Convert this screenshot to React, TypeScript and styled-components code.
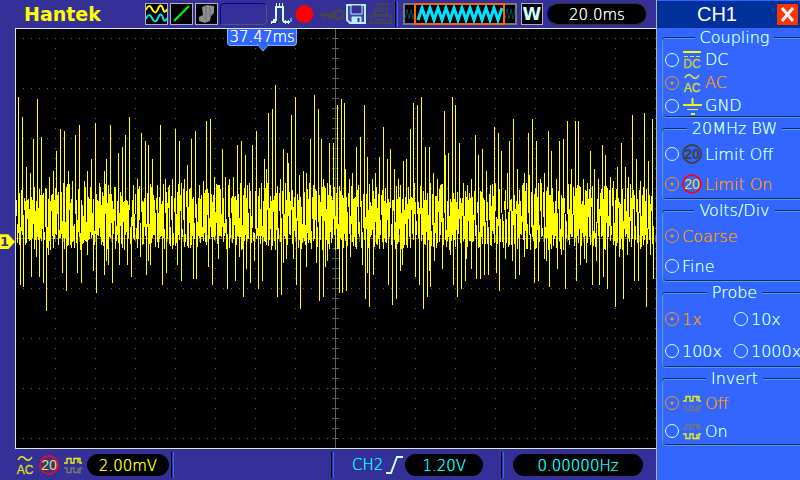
import React from "react";
import styled, { createGlobalStyle } from "styled-components";

const UI_FONT = '"DejaVu Sans", "Liberation Sans", sans-serif';
const ORANGE = "#ff9900";
const PALE = "#ccffff";
const BLUE = "#3366ff";
const INDIGO = "#353098";

const GlobalStyle = createGlobalStyle`
  * { box-sizing: border-box; }
  body { margin: 0; background: ${INDIGO}; }
  button, input, output { font: inherit; }
`;

const Screen = styled.div`
  display: flex;
  min-height: 100vh;
  overflow: hidden;
  background: ${INDIGO};
  font-family: ${UI_FONT};
  font-weight: 200;
  font-size: 15px;
  text-shadow: 0 0 0 currentColor;
  svg, h1, h2, button { text-shadow: none; }
`;

const Scope = styled.main`
  flex: 1;
  min-width: 0;
  display: flex;
  flex-direction: column;
`;

const Toolbar = styled.header`
  display: flex;
  align-items: center;
  gap: 2px;
  height: 28px;
  padding-left: 24px;
`;

const Brand = styled.h1`
  margin: 0;
  width: 119px;
  flex: none;
  font-size: 19px;
  line-height: 28px;
  font-weight: 700;
  color: #ffff00;
`;

const ToolButton = styled.button<{ $w: number; $framed?: boolean }>`
  flex: none;
  width: ${(p) => p.$w}px;
  height: 22px;
  padding: 0;
  border: ${(p) => (p.$framed ? "1px solid #b0b0b8" : "0")};
  background: ${(p) => (p.$framed ? "#000" : "transparent")};
  color: ${PALE};
  font-weight: 700;
  font-size: 17px;
  line-height: 20px;
  text-align: center;
  svg { display: block; }
`;

const EmptySlot = styled.div`
  flex: none;
  width: 47px;
  height: 22px;
  border: 1px solid #555577;
  border-top-color: #0000a8;
  border-left-color: #0000a8;
  border-radius: 4px;
`;

const Divider = styled.div`
  flex: none;
  width: 3px;
  height: 26px;
  background: linear-gradient(90deg, #000 1px, transparent 1px 2px, ${BLUE} 2px);
`;

const TimeGroup = styled.div`
  display: flex;
  align-items: center;
  gap: 4px;
  margin-left: 3px;
`;

const Pill = styled.output<{ $w: number; $color: string; $edge?: boolean }>`
  flex: none;
  width: ${(p) => p.$w}px;
  height: 22px;
  line-height: ${(p) => (p.$edge ? 22 : 24)}px;
  text-align: center;
  border-radius: 11px;
  background: #000;
  color: ${(p) => p.$color};
  border: ${(p) => (p.$edge ? "1px solid #333" : "0")};
  border-left-color: #0000a8;
`;

const PlotRow = styled.div`
  flex: 1;
  display: flex;
  min-height: 0;
`;

const Gutter = styled.div`
  position: relative;
  width: 15px;
  flex: none;
`;

const ChannelMarker = styled.div`
  position: absolute;
  top: 49%;
  left: 0;
  width: 15px;
  height: 15px;
  background: #ffff00;
  clip-path: polygon(0 0, 55% 0, 100% 50%, 55% 100%, 0 100%);
  color: ${INDIGO};
  font-size: 13px;
  font-weight: 700;
  line-height: 15px;
  text-shadow: none;
`;

const Plot = styled.section`
  position: relative;
  flex: 1;
  min-width: 0;
  background: #000;
  border: 1px solid #dde6e6;
  border-right: 0;
  > svg { display: block; width: 100%; height: 100%; }
`;

const TriggerTag = styled.div`
  position: absolute;
  top: 0;
  left: 33%;
  width: 70px;
  height: 17px;
  line-height: 17px;
  text-align: center;
  color: #fff;
  background: ${BLUE};
  border: 1px solid #66b8ff;
  border-top: 0;
  border-radius: 0 0 4px 4px;
  svg { position: absolute; top: 15px; left: 28px; }
`;

const StatusBar = styled.footer`
  display: grid;
  grid-template-columns: 171fr 160fr 170fr 155fr;
  height: 31px;
`;

const StatusCell = styled.div<{ $start?: number; $gap?: number }>`
  display: flex;
  align-items: center;
  gap: ${(p) => p.$gap ?? 0}px;
  padding-left: ${(p) => p.$start ?? 0}px;
  margin: 3px 0 2px;
  color: #00ffff;
  svg { flex: none; }
`;

const Ruled = styled(StatusCell)`
  background: linear-gradient(90deg, #000 1px, transparent 1px 2px, ${BLUE} 2px 3px, transparent 3px);
`;

const Panel = styled.aside`
  width: 144px;
  flex: none;
  overflow: hidden;
  background: ${BLUE};
  border-left: 1px solid #b0b0b0;
`;

const PanelHead = styled.div`
  display: flex;
  align-items: center;
  height: 28px;
  padding-right: 2px;
  border-top: 1px solid ${BLUE};
  background: #003099;
`;

const PanelTitle = styled.h2`
  flex: 1;
  margin: 0;
  text-align: center;
  color: #fff;
  font-family: "Liberation Sans", Arial, sans-serif;
  font-size: 20px;
  font-weight: 400;
`;

const CloseButton = styled.button`
  width: 21px;
  height: 21px;
  padding: 0;
  border: 0;
  background: #ff3300;
  svg { display: block; }
`;

const Groups = styled.form`
  display: flex;
  flex-direction: column;
  gap: 3px;
  padding: 2px 0 0 5px;
  margin-right: -5px;
`;

const Group = styled.fieldset<{ $pad: number }>`
  min-width: 0;
  margin: 0;
  padding: ${(p) => p.$pad}px 0 0 2px;
  border: 1px solid #5c9ccc;
  border-radius: 4px;
  box-shadow: 0 -1px #002a80, inset 0 -1px #002a80;
  color: ${PALE};
  legend {
    margin: 0 auto;
    padding: 0 5px;
    line-height: 16px;
    font-size: 16px;
    background: ${BLUE};
  }
`;

const Options = styled.div<{ $cols: number; $row: number }>`
  display: grid;
  grid-template-columns: ${(p) => (p.$cols === 2 ? "69px 1fr" : "1fr")};
  grid-auto-rows: ${(p) => p.$row}px;
`;

const Option = styled.label`
  display: flex;
  align-items: center;
  gap: 3px;
  font-size: 16px;
  white-space: nowrap;
  &:has(input:checked) { color: ${ORANGE}; }
  svg { flex: none; }
`;

const Radio = styled.input`
  appearance: none;
  flex: none;
  width: 14px;
  height: 14px;
  margin: 0;
  border: 1px solid ${PALE};
  border-radius: 50%;
  &:checked {
    border-color: ${ORANGE};
    background: radial-gradient(circle, ${ORANGE} 1px, transparent 2px);
  }
`;

/* Trace extremes: x,y pairs at three units per pixel, one list per third of the sweep. */
const SEGMENTS: { origin: number; peaks: number[]; dips: number[] }[] = [
  {
    origin: 0,
    peaks: [55,50,67,110,79,262,91,278,100,178,112,58,124,171,148,290,160,273,169,213,181,147,193,153,205,273,217,303,226,165,238,135,253,303,262,273,274,237,286,129,301,320,313,273,319,237,331,135,343,320,355,219,367,201,376,165,388,111,400,315,412,297,424,159,436,183,445,195,457,237,472,315,481,135,496,297,517,297,526,147,538,183,553,297,562,255,574,177,586,153,598,315,609,303,619,123,631,117,643,291,655,315],
    dips: [61,614,70,620,94,590,109,530,118,590,130,608,139,692,145,524,187,578,199,632,232,578,244,608,262,524,280,572,289,638,313,584,319,542,325,554,337,608,358,554,382,554,394,590,421,530,439,584,445,542,451,554,487,614,499,578,532,554,544,602,580,596,589,596,625,560,637,614,655,536],
  },
  {
    origin: 220,
    peaks: [7,207,16,291,28,297,40,291,52,195,64,183,76,225,88,309,97,195,109,153,133,237,139,267,145,99,157,87,166,15,181,297,190,207,202,219,205,249,214,105,226,51,238,285,250,273,259,279,271,177,283,45,295,87,304,177,310,297,328,189,340,189,352,75,364,57,373,69,376,267,388,297,397,279,409,201,421,171,433,75,442,231,457,297,466,279,478,231,490,141,502,237,511,207,523,267,535,297,550,243,559,237,571,147,580,69,592,75,604,51,616,201,628,201,640,279,652,297],
    dips: [22,626,46,602,58,530,70,650,79,566,91,608,103,542,115,626,127,602,172,650,184,644,190,548,199,536,220,536,229,614,241,686,259,560,289,548,298,662,310,650,316,560,322,542,358,638,367,638,379,632,391,530,427,554,436,656,442,578,448,680,460,584,505,614,517,674,529,656,541,572,547,554,586,590,598,614,610,686,622,650,628,572,631,620,643,542],
  },
  {
    origin: 440,
    peaks: [1,315,13,93,16,225,25,219,37,51,46,75,58,189,70,309,82,315,94,297,106,165,115,225,127,207,139,273,151,315,163,141,175,159,184,213,202,279,208,183,220,117,232,267,247,315,253,279,265,159,268,285,277,117,289,183,301,297,313,279,325,153,334,213,349,297,358,183,370,177,382,123,394,267,406,123,415,123,430,297,442,309,451,213,463,267,475,297,487,195,496,225,511,291,520,303,532,261,544,189,556,261,565,291,577,105,589,237,601,303,613,99,625,243,637,117],
    dips: [7,566,31,524,40,614,52,650,64,626,76,602,79,536,94,566,109,596,121,596,133,584,145,584,169,578,178,632,196,536,217,542,226,596,238,584,253,530,283,608,295,602,313,536,319,542,328,620,352,566,364,524,376,626,409,602,421,554,433,536,439,548,457,614,469,542,478,614,490,590,502,626,526,680,538,530,550,656,562,524,583,602,595,602,619,680,631,524,640,596],
  },
];

function tracePath(): string {
  const tops = new Map<number, number>();
  const bottoms = new Map<number, number>();
  const fill = (target: Map<number, number>, list: number[], origin: number) => {
    for (let i = 0; i < list.length; i += 2) {
      target.set(origin + Math.floor(list[i] / 3), 80 + Math.round(list[i + 1] / 3));
    }
  };
  for (const s of SEGMENTS) {
    fill(tops, s.peaks, s.origin);
    fill(bottoms, s.dips, s.origin);
  }
  let seed = 7;
  const rand = (lo: number, hi: number) => {
    seed = (seed * 16807) % 2147483647;
    return Math.round(lo + (seed / 2147483647) * (hi - lo));
  };
  let d = "";
  for (let x = 16; x <= 653; x++) {
    const kind = (x % 3) * 33 + rand(0, 33);
    const high = kind < 62;
    const low = kind > 33;
    const top = tops.get(x) ?? (high ? rand(183, 202) : rand(198, 234));
    const bottom = bottoms.get(x) ?? (low ? rand(234, 250) : rand(206, 242));
    d += `M${x}.5 ${top}V${Math.max(bottom, top + 8)}`;
  }
  return d;
}

const TRACE = tracePath();

function gridDots(): string {
  let d = "";
  for (let y = 38; y <= 438; y += 50) {
    if (y === 238) continue;
    for (let x = 23; x < 656; x += 8) d += `M${x} ${y}h1v1h-1z`;
  }
  for (let x = 55; x < 656; x += 40) {
    if (x === 335) continue;
    for (let y = 38; y < 448; y += 10) d += `M${x} ${y}h1v1h-1z`;
  }
  for (let x = 23; x < 656; x += 8) d += `M${x} 235h1v7h-1z`;
  for (let y = 38; y < 448; y += 10) d += `M332 ${y}h7v1h-7z`;
  return d + "M16 238h640v1H16zM335 29h1v419h-1z";
}

const GRID = gridDots();

const SquareWave = ({ up = true }: { up?: boolean }) => (
  <svg width="20" height="17" viewBox="0 0 20 17" fill="none" strokeWidth="1.400" aria-hidden="true">
    <path d="M1 6h3V1.500h4V6h3V1.500h4V6M15 1.500h2V6h2" stroke={up ? "#f0f010" : "#77777a"} />
    <path d="M1 11h3v4.500h4V11h3v4.500h4V11M15 15.500h2V11h2" stroke={up ? "#77777a" : "#f0f010"} />
  </svg>
);

const AcIcon = () => (
  <svg width="20" height="20" viewBox="0 0 20 20" aria-hidden="true">
    <path d="M3 5C5 1 8 1 10 3.500S15 6 17 2" stroke="#eeee22" strokeWidth="1.500" fill="none" />
    <text x="10" y="18.500" textAnchor="middle" fontFamily="Liberation Sans" fontSize="12" fontWeight="400" fill="#dede22" stroke="#dede22" strokeWidth="0.300">AC</text>
  </svg>
);

const DcIcon = () => (
  <svg width="20" height="20" viewBox="0 0 20 20" aria-hidden="true">
    <path d="M1 2h18" stroke="#ffff00" strokeWidth="2" />
    <path d="M2 6.500h16" stroke="#e0e044" strokeDasharray="4 2" />
    <text x="10" y="18" textAnchor="middle" fontFamily="Liberation Sans" fontSize="12" fontWeight="400" fill="#cccc33" stroke="#cccc33" strokeWidth="0.300">DC</text>
  </svg>
);

const GroundIcon = () => (
  <svg width="20" height="20" viewBox="0 0 20 20" stroke="#f0f020" aria-hidden="true">
    <path d="M10.500 2v7M1 9h19" strokeWidth="2" />
    <path d="M5 13.500h11" />
    <path d="M9 18h4" strokeWidth="2" />
  </svg>
);

const LimitIcon = ({ on }: { on: boolean }) => (
  <svg width="20" height="20" viewBox="0 0 20 20" aria-hidden="true">
    <circle cx="10" cy="10" r="9" fill="none" stroke={on ? "#e80c22" : "#404040"} strokeWidth="1.800" />
    <text x="10" y="15" textAnchor="middle" fontFamily="Liberation Sans" fontSize="14" fontWeight={on ? 400 : 700} fill={on ? "#e6e633" : "#404040"}>20</text>
  </svg>
);

interface OptionDef { label: string; icon?: React.ReactNode; on?: boolean }

const OptionGroup = ({ title, pad, row, cols = 1, options }: {
  title: string; pad: number; row: number; cols?: number; options: OptionDef[];
}) => (
  <Group $pad={pad}>
    <legend>{title}</legend>
    <Options $cols={cols} $row={row}>
      {options.map((o) => (
        <Option key={o.label}>
          <Radio type="radio" name={title} defaultChecked={o.on} />
          {o.icon}
          {o.label}
        </Option>
      ))}
    </Options>
  </Group>
);

const stripWave = (from: number, to: number, step: number, hi: number, lo: number) => {
  let d = `M${from} ${lo}`;
  for (let x = from + step, i = 0; x <= to; x += step, i++) d += `L${x} ${i % 2 ? lo : hi}`;
  return d;
};

export default function App() {
  return (
    <>
      <GlobalStyle />
      <Screen>
        <Scope>
          <Toolbar>
            <Brand>Hantek</Brand>
            <ToolButton $w={23} $framed aria-label="Channels">
              <svg width="21" height="20" viewBox="0 0 21 20" fill="none" strokeWidth="2">
                <path d="M0 6C2 1 4 1 6 5S10 10 12 5S16 1 17 5S20 8 21 5" stroke="#ffff00" />
                <path d="M0 15C2 10 4 10 6 14S10 19 12 14S16 10 17 14S20 17 21 14" stroke="#00e5ff" />
              </svg>
            </ToolButton>
            <ToolButton $w={23} $framed aria-label="Vectors">
              <svg width="21" height="20" viewBox="0 0 21 20"><path d="M3 17L18 2" stroke="#00ff00" strokeWidth="2" /></svg>
            </ToolButton>
            <ToolButton $w={23} $framed aria-label="Persistence">
              <svg width="21" height="20" viewBox="0 0 21 20">
                <path d="M6 3l5-2 7 1v7l-3 3-1 5-5 2-6-2v-4l4-2z" fill="#888" />
                <path d="M8 3v8M12 2v14M16 3v6M6 13v5" stroke="#aaa" opacity="0.600" />
                <path d="M10 3v12M14 4v8" stroke="#666" opacity="0.600" />
              </svg>
            </ToolButton>
            <EmptySlot />
            <ToolButton $w={24} aria-label="Pulse">
              <svg width="24" height="22" viewBox="0 0 24 22" fill="none" stroke={PALE}>
                <path d="M2 19h4V17h1V4h7v13l1 2h6" strokeWidth="2" />
                <path d="M7.500 0v4M10.500 0v4M13.500 0v4M2.500 18v3M4.500 16v4M16.500 17v4M19.500 17v4M22 15v4" />
              </svg>
            </ToolButton>
            <ToolButton $w={19} aria-label="Record">
              <svg width="19" height="22" viewBox="0 0 19 22"><circle cx="9.500" cy="11" r="9" fill="#ff0000" /></svg>
            </ToolButton>
            <ToolButton $w={28} aria-label="Lock">
              <svg width="28" height="22" viewBox="0 0 28 22" fill="none" stroke="#444450">
                <path d="M4 11.500L7 10H19V13H5z" fill="#444450" />
                <path d="M8.500 12v5M12.500 12v4M16.500 12v5" strokeWidth="2" />
                <circle cx="22.500" cy="11.500" r="4" strokeWidth="3" />
              </svg>
            </ToolButton>
            <ToolButton $w={21} aria-label="Save">
              <svg width="21" height="22" viewBox="0 0 21 22" fill="none" stroke="#bcecff">
                <path d="M1 2h18v18H4l-3-3z" strokeWidth="2" fill="#3f4ca8" />
                <path d="M5 2h11v9H5z" fill="#353098" strokeWidth="1" />
                <path d="M6 14h9v6H6z" fill="#bcecff" />
                <path d="M12.500 15v4" stroke="#353098" strokeWidth="2" />
              </svg>
            </ToolButton>
            <ToolButton $w={24} aria-label="Print">
              <svg width="24" height="22" viewBox="0 0 24 22" fill="none" stroke="#444450" strokeWidth="2">
                <path d="M8 1h11l-2 11H5zM2 13h20v7H2zM5 17h14M9 5h7M8 8h7" />
              </svg>
            </ToolButton>
            <Divider />
            <TimeGroup>
              <svg width="114" height="22" viewBox="0 0 114 22" fill="none" role="img" aria-label="Record position">
                <path d="M1 1h112v20H1z" fill="#000" stroke="#777780" strokeWidth="2" />
                <path d={stripWave(2, 112, 2, 6, 16)} stroke="#004a55" />
                <path d="M12 1h89v20H12z" fill="#000" stroke="#ff6600" strokeWidth="2" />
                <path d={stripWave(15, 100, 4, 5, 17)} stroke="#00e5ff" strokeWidth="3" />
              </svg>
              <ToolButton $w={22} $framed aria-label="Window">W</ToolButton>
              <Pill $w={100} $color="#fff" $edge>20.0ms</Pill>
            </TimeGroup>
          </Toolbar>
          <PlotRow>
            <Gutter><ChannelMarker>1</ChannelMarker></Gutter>
            <Plot aria-label="Waveform">
              <svg viewBox="16 29 640 419" preserveAspectRatio="none" shapeRendering="crispEdges">
                <path d={GRID} fill="#606060" />
                <path d={TRACE} stroke="#ffff00" strokeWidth="1" />
              </svg>
              <TriggerTag>
                37.47ms
                <svg width="14" height="8" viewBox="0 0 14 8"><path d="M1 0L7 7L13 0" fill={BLUE} stroke="#66b8ff" /></svg>
              </TriggerTag>
            </Plot>
          </PlotRow>
          <StatusBar>
            <StatusCell $gap={4} $start={15}>
              <AcIcon />
              <LimitIcon on />
              <SquareWave />
              <Pill $w={82} $color="#ffff00">2.00mV</Pill>
            </StatusCell>
            <Ruled />
            <Ruled $gap={2} $start={21}>
              CH2
              <svg width="18" height="20" viewBox="0 0 18 20" fill="none" stroke={PALE} strokeWidth="2"><path d="M1 18h5L12 2h6" /></svg>
              <Pill $w={78} $color="#00ffff">1.20V</Pill>
            </Ruled>
            <Ruled $start={12}>
              <Pill $w={130} $color="#00ffff">0.00000Hz</Pill>
            </Ruled>
          </StatusBar>
        </Scope>
        <Panel>
          <PanelHead>
            <PanelTitle>CH1</PanelTitle>
            <CloseButton aria-label="Close">
              <svg width="21" height="21" viewBox="0 0 21 21"><path d="M5 4l11 13M16 4L5 17" stroke="#fff" strokeWidth="3" /></svg>
            </CloseButton>
          </PanelHead>
          <Groups>
            <OptionGroup title="Coupling" pad={2} row={23} options={[
              { label: "DC", icon: <DcIcon /> },
              { label: "AC", icon: <AcIcon />, on: true },
              { label: "GND", icon: <GroundIcon /> },
            ]} />
            <OptionGroup title="20MHz BW" pad={2} row={30} options={[
              { label: "Limit Off", icon: <LimitIcon on={false} /> },
              { label: "Limit On", icon: <LimitIcon on />, on: true },
            ]} />
            <OptionGroup title="Volts/Div" pad={2} row={30} options={[
              { label: "Coarse", on: true },
              { label: "Fine" },
            ]} />
            <OptionGroup title="Probe" pad={2} row={32} cols={2} options={[
              { label: "1x", on: true },
              { label: "10x" },
              { label: "100x" },
              { label: "1000x" },
            ]} />
            <OptionGroup title="Invert" pad={2} row={28} options={[
              { label: "Off", icon: <SquareWave />, on: true },
              { label: "On", icon: <SquareWave up={false} /> },
            ]} />
          </Groups>
        </Panel>
      </Screen>
    </>
  );
}
